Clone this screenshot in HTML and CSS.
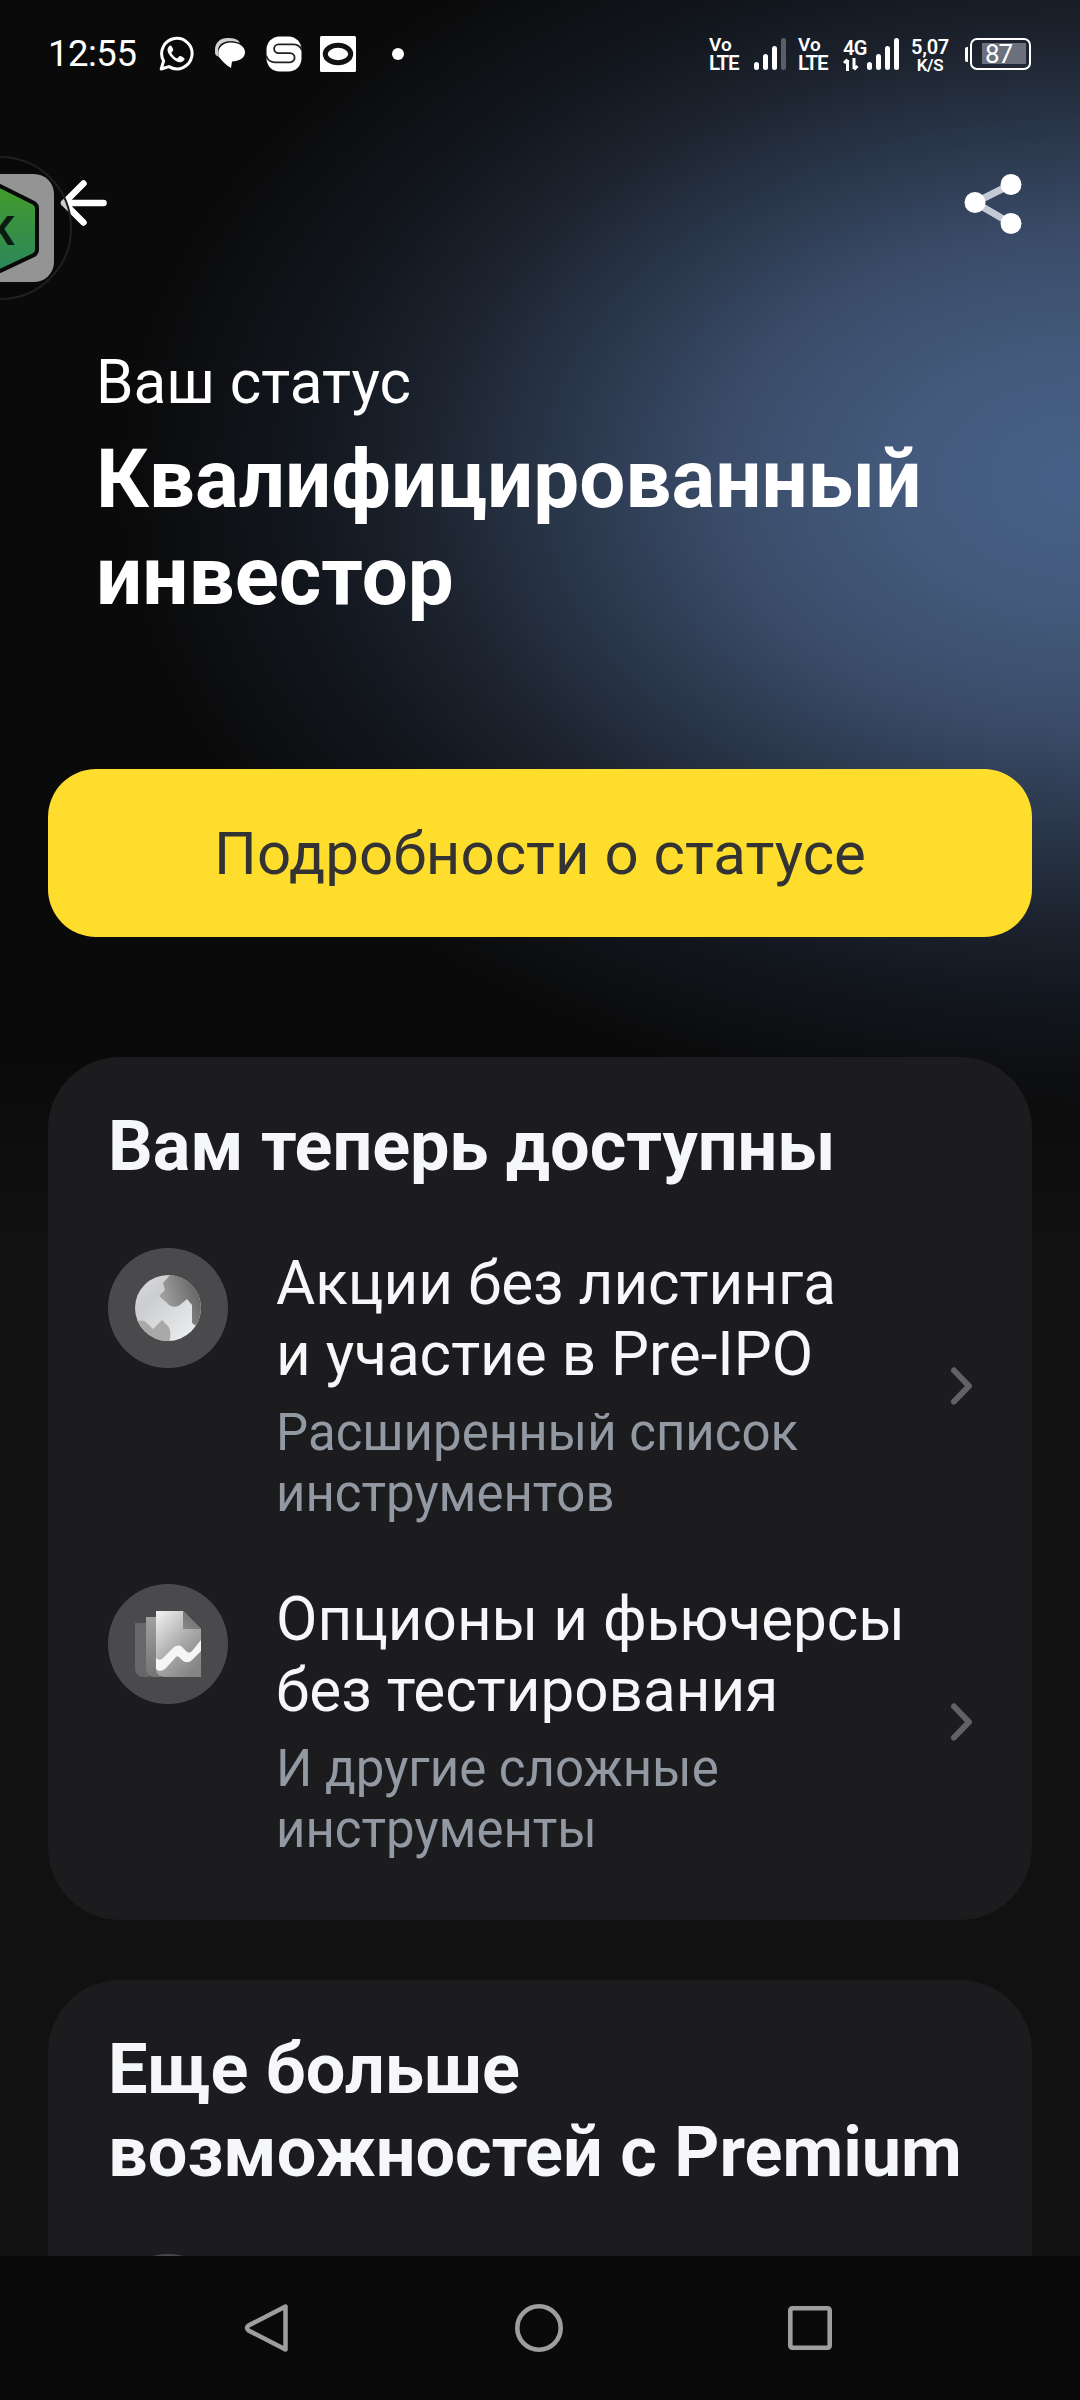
FILE: index.html
```html
<!DOCTYPE html>
<html lang="ru">
<head>
<meta charset="utf-8">
<title>Статус инвестора</title>
<link rel="stylesheet" href="styles.css">
</head>
<body>
<div class="screen">
  <div class="status-bar">
    <span class="clock">12:55</span>
    <svg class="ic-whatsapp" width="36" height="36" viewBox="0 0 36 36"><path d="M3.2 33 5.600 25A15.200 15.200 0 1 1 11 30.600Z" fill="none" stroke="#fff" stroke-width="3" stroke-linejoin="round"/><path d="M12.800 9.600c-1-.3-3.200 1.400-3.300 4.200-.1 5 7.700 12.800 12.900 12.500 2.500-.2 4.300-2.200 4.200-3.700-.1-.9-4.300-3-5-2.600l-2.300 2.500c-2.200-.7-5-3.500-6-5.800l1.900-2.200c.4-.9-1.500-4.700-2.400-4.900Z" fill="#fff"/></svg>
    <svg class="ic-chat" width="30" height="32" viewBox="0 0 30 32"><path d="M0 15C-1 5 5 0 12 0c7 0 11 1 13 5-8-3-22-3-22 8 0 2 0 4 1 6-2-1-4-2-4-4Z" fill="#d0d0d0"/><path d="M16 4.500c8 0 14 4 14 9.800 0 6-6 8.700-13 9.200l-1 6.500c-5-3-8-6-12-11C1.500 12 6 4.500 16 4.500Z" fill="#fff"/></svg>
    <svg class="ic-s" width="36" height="36" viewBox="0 0 36 36"><rect x=".5" y=".5" width="35" height="35" rx="13" fill="#fff"/><path d="M36 14.500C34.500 9.500 31 8.300 27 8.300H12.500a4.400 4.400 0 0 0 0 8.800H24a4.600 4.600 0 0 1 0 9.200H9C4.500 26.300 1.500 24 0 19.500" fill="none" stroke="#222" stroke-width="1.800"/></svg>
    <svg class="ic-square" width="36" height="36" viewBox="0 0 36 36"><rect width="36" height="36" rx="1.500" fill="#fff"/><ellipse cx="18" cy="18" rx="12.700" ry="8.700" fill="none" stroke="#111" stroke-width="5"/></svg>
    <span class="more-dot"></span>
    <span class="status-spacer"></span>
    <span class="volte"><span>Vo</span><span class="lte">LTE</span></span>
    <svg class="bars bars-1" width="32" height="32" viewBox="0 0 32 32" fill="#fff"><rect y="24" width="5" height="8" rx="2.500"/><rect x="9" y="16" width="5" height="16" rx="2.500"/><rect x="18" y="8" width="5" height="24" rx="2.500"/><rect x="27" width="5" height="32" rx="2.500" fill="#5a5e69"/></svg>
    <span class="volte"><span>Vo</span><span class="lte">LTE</span></span>
    <span class="net"><span>4G</span><svg width="16" height="13" viewBox="0 0 16 13"><path d="M4.500 13V2M1 5l3.500-3.500M11 0v11M14.500 8 11 11.500" fill="none" stroke="#fff" stroke-width="3"/></svg></span>
    <svg class="bars bars-2" width="32" height="32" viewBox="0 0 32 32" fill="#fff"><rect y="24" width="5" height="8" rx="2.500"/><rect x="9" y="16" width="5" height="16" rx="2.500"/><rect x="18" y="8" width="5" height="24" rx="2.500"/><rect x="27" width="5" height="32" rx="2.500"/></svg>
    <span class="speed"><span>5,07</span><span class="unit">K/S</span></span>
    <span class="battery"><span class="battery-nub"></span><span class="battery-body"><span class="battery-fill">87</span></span></span>
  </div>

  <div class="toolbar">
    <svg class="back" width="48" height="48" viewBox="0 0 48 48"><path d="M23.500 4.500 4 24l19.500 19.500M4 24h39.500" fill="none" stroke="#fff" stroke-width="6.500" stroke-linecap="round" stroke-linejoin="round"/></svg>
    <svg width="58" height="62" viewBox="0 0 58 62"><path d="M47 11.500 11 29.500 47 50.500" fill="none" stroke="#c3c9d6" stroke-width="7"/><g fill="#fff"><circle cx="11" cy="29.500" r="10.500"/><circle cx="47" cy="11.500" r="10.500"/><circle cx="47" cy="50.500" r="10.500"/></g></svg>
  </div>

  <div class="hero">
    <p class="hero-label">Ваш статус</p>
    <h1 class="hero-title">Квалифицированный<br>инвестор</h1>
  </div>

  <div class="primary-button">Подробности о статусе</div>

  <section class="card">
    <h2 class="card-title">Вам теперь доступны</h2>
    <div class="items">
      <div class="item">
        <span class="item-icon">
          <svg width="66" height="66" viewBox="0 0 66 66">
            <defs>
              <linearGradient id="globe" x1="0" y1="0" x2="1" y2="1"><stop offset="0" stop-color="#dcddde"/><stop offset=".3" stop-color="#cccdcf"/><stop offset="1" stop-color="#f2f3f4"/></linearGradient>
              <linearGradient id="land" x1="0" y1=".7" x2="1" y2=".3"><stop offset="0" stop-color="#ababac"/><stop offset="1" stop-color="#5c5c5d"/></linearGradient>
              <clipPath id="disc"><circle cx="33" cy="33" r="33"/></clipPath>
            </defs>
            <g clip-path="url(#disc)">
              <rect width="66" height="66" fill="url(#globe)"/>
              <path d="M36-1 28 8l2 7-6 6 7 6c5 6 11 6 15 2l6-5 5 6v18l4 3h8V-2Z" fill="url(#land)"/>
              <path d="M0 46c6-1 10-1 13 3l5 5 9-9 6 6c3 4 3 9 1 17H0Z" fill="#a9a9aa"/>
            </g>
          </svg>
        </span>
        <div class="item-text">
          <p class="item-title">Акции без листинга<br>и участие в Pre-IPO</p>
          <p class="item-sub">Расширенный список<br>инструментов</p>
        </div>
        <svg class="chevron" width="24" height="38" viewBox="0 0 24 38"><path d="M3 3.500 18 19 3 34.500" fill="none" stroke="#626264" stroke-width="6" stroke-linecap="round" stroke-linejoin="round"/></svg>
      </div>
      <div class="item">
        <span class="item-icon">
          <svg width="66" height="66" viewBox="0 0 66 66">
            <defs>
              <linearGradient id="page1" x1="0" y1="0" x2=".7" y2="1"><stop offset="0" stop-color="#f2f3f4"/><stop offset=".6" stop-color="#a8a8a9"/><stop offset="1" stop-color="#858586"/></linearGradient>
              <linearGradient id="page2" x1="0" y1="0" x2="0" y2="1"><stop offset="0" stop-color="#a0a0a1"/><stop offset="1" stop-color="#747475"/></linearGradient>
              <linearGradient id="fold" x1="0" y1="1" x2="1" y2="0"><stop offset="0" stop-color="#8a8a8b"/><stop offset="1" stop-color="#666667"/></linearGradient>
            </defs>
            <path d="M0 12h14v54H8a8 8 0 0 1-8-8Z" fill="#67676a"/>
            <path d="M11 6h14v60h-6a8 8 0 0 1-8-8Z" fill="url(#page2)"/>
            <path d="M21 0h27l18 18v48H29a8 8 0 0 1-8-8Z" fill="url(#page1)"/>
            <path d="M48 0 66 18H48Z" fill="url(#fold)"/>
            <path d="M21 47c4 3 5 2 8-1l10-10c3-2 6-2 8 0l4 4c2 2 4 2 6 0l9-11v11L57 49c-3 3-7 3-10 0l-3-3c-1-1-2-1-3 0L31 57c-3 3-7 4-10 1Z" fill="#f5f6f7"/>
          </svg>
        </span>
        <div class="item-text">
          <p class="item-title">Опционы и фьючерсы<br>без тестирования</p>
          <p class="item-sub">И другие сложные<br>инструменты</p>
        </div>
        <svg class="chevron" width="24" height="38" viewBox="0 0 24 38"><path d="M3 3.500 18 19 3 34.500" fill="none" stroke="#626264" stroke-width="6" stroke-linecap="round" stroke-linejoin="round"/></svg>
      </div>
    </div>
  </section>

  <section class="card card-premium">
    <h2 class="card-title">Еще больше<br>возможностей с Premium</h2>
    <div class="items">
      <div class="item"><span class="item-icon"></span></div>
    </div>
  </section>

  <div class="nav-bar">
    <svg width="48" height="52" viewBox="0 0 48 52"><path d="M41.500 4.500v43L4.500 28.500q-3-2.500 0-5Z" fill="none" stroke="#9e9e9e" stroke-width="4.500" stroke-linejoin="round"/></svg>
    <svg width="48" height="48" viewBox="0 0 48 48"><circle cx="24" cy="24" r="21.700" fill="none" stroke="#9e9e9e" stroke-width="4.600"/></svg>
    <svg width="48" height="48" viewBox="0 0 48 48"><rect x="4.300" y="4.300" width="39.400" height="39.400" rx="2" fill="none" stroke="#9e9e9e" stroke-width="4.600"/></svg>
  </div>

  <svg class="bubble" width="73" height="146" viewBox="0 0 73 146">
    <defs><linearGradient id="hex" x1="0" y1="0" x2="0" y2="1"><stop offset="0" stop-color="#449b2b"/><stop offset="1" stop-color="#2a865c"/></linearGradient></defs>
    <circle cx="0" cy="73" r="71" fill="#000" fill-opacity=".2" stroke="#202020" stroke-width="2"/>
    <rect x="-54" y="19" width="108" height="108" rx="20" fill="#949494"/>
    <path d="M0 31 34 48q3 2 3 5v42q0 3-3 5L0 116l-37-18V50Z" fill="url(#hex)" stroke="#080808" stroke-width="4"/>
    <text x="-11" y="90" class="bubble-mark">K</text>
  </svg>
</div>
</body>
</html>
```
FILE: styles.css
```css
* {
  box-sizing: border-box;
}

body {
  margin: 0;
  background: #0a0a0a;
  font-family: Roboto, "Liberation Sans", sans-serif;
  color: #fff;
}

p, h1, h2 {
  margin: 0;
}

svg {
  display: block;
  flex: none;
}

.screen {
  position: relative;
  display: flex;
  flex-direction: column;
  width: 1080px;
  height: 2400px;
  overflow: hidden;
  background:
    radial-gradient(ellipse 970px 640px at 1090px 480px,
      #476088 0%, #435a7c 20%, #3a4c69 38%, #2a374b 54%,
      #1c232e 69%, #12161d 82%, rgba(10, 10, 10, 0) 100%),
    linear-gradient(#0a0a0a 1060px, #111 1240px);
}

.status-bar {
  display: flex;
  flex: none;
  align-items: center;
  height: 108px;
  padding: 0 49px 0 48px;
}

.clock {
  width: 110px;
  font-size: 36.5px;
  line-height: 40px;
  letter-spacing: -.5px;
}

.ic-chat { margin-left: 21px; }
.ic-s { margin-left: 21px; }
.ic-square { margin-left: 18px; }

.more-dot {
  width: 12px;
  height: 12px;
  margin-left: 36px;
  border-radius: 50%;
  background: #fff;
}

.status-spacer { flex: 1; }

.volte, .net, .speed {
  display: flex;
  flex: none;
  flex-direction: column;
  font-weight: 600;
}

.volte {
  width: 32px;
  font-size: 19px;
  line-height: 18px;
}

.lte {
  font-size: 20.5px;
  line-height: 18px;
  letter-spacing: -1.2px;
}

.bars-1 { margin: 0 12px 0 13px; }

.net {
  width: 24px;
  margin-left: 13px;
  font-size: 20px;
  line-height: 20px;
  letter-spacing: -.6px;
}

.bars-2 { margin-right: 12px; }

.speed {
  align-items: center;
  width: 38px;
  padding-top: 4px;
  font-size: 20px;
  line-height: 18px;
  letter-spacing: -.3px;
}

.unit { font-size: 17px; }

.battery {
  display: flex;
  align-items: center;
  gap: 2px;
  margin-left: 16px;
}

.battery-nub {
  width: 3px;
  height: 15px;
  border-radius: 2px 0 0 2px;
  background: #fff;
}

.battery-body {
  width: 61px;
  height: 32px;
  padding: 3px 3px 3px 10px;
  border: 2.5px solid #fff;
  border-radius: 7px;
}

.battery-fill {
  display: block;
  height: 21px;
  padding-left: 3px;
  background: #6c707d;
  font-size: 26px;
  line-height: 22px;
  letter-spacing: -1px;
}

.toolbar {
  display: flex;
  flex: none;
  align-items: center;
  justify-content: space-between;
  height: 192px;
  padding: 0 58px 0 60px;
}

.back { margin-bottom: 2px; }

.hero {
  flex: none;
  height: 469px;
  padding: 47px 96px 0;
}

.hero-label {
  font-size: 60.2px;
  line-height: 72px;
}

.hero-title {
  padding-top: 12px;
  font-size: 81.7px;
  line-height: 97px;
  font-weight: 700;
}

.primary-button {
  display: flex;
  flex: none;
  align-items: center;
  justify-content: center;
  height: 168px;
  margin: 0 48px;
  border-radius: 48px;
  background: #ffdd2d;
  color: #333;
  font-size: 60px;
}

.card {
  flex: none;
  height: 863px;
  margin: 120px 48px 0;
  padding: 48px 57px 60px 60px;
  border-radius: 72px;
  background: #1c1c1e;
  color: #f6f7f8;
}

.card-premium {
  height: 276px;
  margin-top: 60px;
  border-radius: 72px 72px 0 0;
  overflow: hidden;
}

.card-title {
  font-size: 70.2px;
  line-height: 83px;
  font-weight: 700;
}

.items {
  display: flex;
  flex-direction: column;
  gap: 60px;
  padding-top: 60px;
}

.item {
  display: flex;
  align-items: center;
}

.item-icon {
  display: flex;
  flex: none;
  align-items: center;
  justify-content: center;
  align-self: flex-start;
  width: 120px;
  height: 120px;
  border-radius: 50%;
  background: #4a4a4c;
}

.item-text {
  flex: 1;
  padding-left: 48px;
}

.item-title {
  font-size: 60.2px;
  line-height: 71px;
}

.item-sub {
  padding-top: 12px;
  color: #9299a2;
  font-size: 51px;
  line-height: 61px;
}

.nav-bar {
  display: flex;
  flex: none;
  align-items: center;
  justify-content: space-between;
  height: 144px;
  padding: 0 246px 0 244px;
  background: #0a0a0a;
}

.bubble {
  position: absolute;
  top: 155px;
  left: 0;
}

.bubble-mark {
  fill: #0c1a10;
  font-size: 40px;
  font-weight: 700;
}
```
